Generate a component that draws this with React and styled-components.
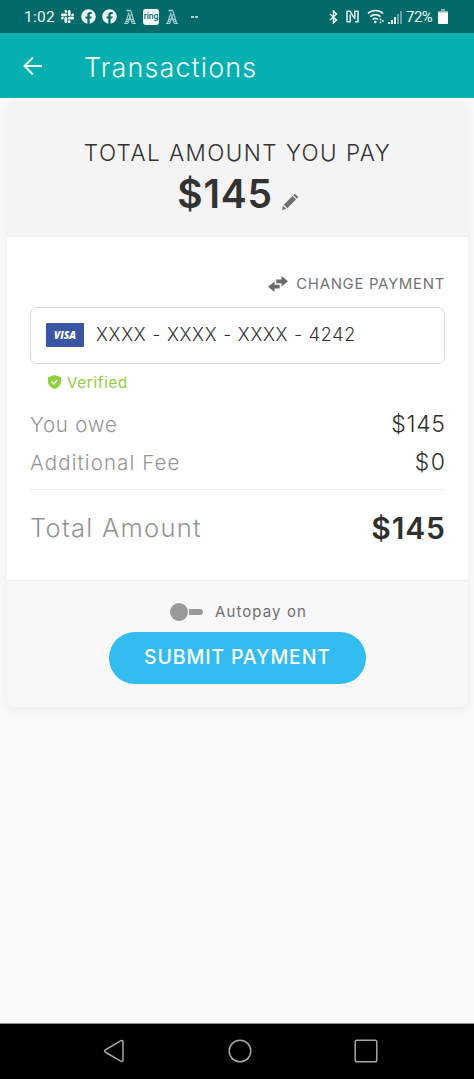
import React, { useState } from "react";
import styled, { createGlobalStyle } from "styled-components";
import { FaSlack, FaFacebook } from "react-icons/fa";

const GlobalStyle = createGlobalStyle`
  * {
    box-sizing: border-box;
  }
  body {
    margin: 0;
    background: #f9f9f9;
    font-family: Inter, "Liberation Sans", sans-serif;
  }
`;
const Screen = styled.div`
  display: flex;
  flex-direction: column;
  width: 474px;
  height: 1079px;
  overflow: hidden;
  background: #f9f9f9;
`;
const StatusBar = styled.div`
  display: flex;
  align-items: center;
  justify-content: space-between;
  flex: none;
  height: 33px;
  padding: 0 26px 0 24px;
  background: #046a69;
  color: #e9f6f5;
  font-family: Roboto, sans-serif;
  font-size: 15.5px;
`;
const StatusGroup = styled.div`
  display: flex;
  align-items: center;
  gap: ${({ $gap }) => $gap}px;
`;
const Clock = styled.span`
  width: 31px;
  margin-right: -1px;
  letter-spacing: 0.3px;
`;
const Connections = styled.span`
  display: flex;
  align-items: center;
  gap: 8px;
  margin-right: -2px;
`;
const Battery = styled.span`
  width: 27px;
  margin-left: -1px;
  font-size: 15px;
  letter-spacing: -0.5px;
`;
const RingBadge = styled.span`
  width: 16px;
  height: 16px;
  border-radius: 3px;
  background: #f4fbfb;
  color: #046a69;
  font: 500 8.5px/15px Roboto, sans-serif;
  text-align: center;
`;
const MoreMark = styled.span`
  display: flex;
  gap: 1px;
  margin-left: 6px;
  &::before,
  &::after {
    content: "";
    width: 3px;
    height: 2px;
    background: #a8d0cf;
  }
`;
const AppBar = styled.header`
  display: flex;
  align-items: center;
  flex: none;
  height: 65px;
  padding: 0 22px;
  background: #06b0b0;
`;
const BackButton = styled.button`
  display: flex;
  width: 62px;
  padding: 0;
  border: none;
  background: none;
`;
const Title = styled.h1`
  margin: 3px 0 0;
  color: #f0fdfd;
  font-size: 27px;
  font-weight: 300;
  letter-spacing: 1.1px;
`;
const Main = styled.main`
  flex: 1;
  padding: 3px 6px 0 7px;
`;
const Card = styled.section`
  border-radius: 8px;
  background: #fff;
  box-shadow: 0 4px 10px rgba(0, 0, 0, 0.05);
`;
const Summary = styled.div`
  height: 136px;
  padding-top: 37px;
  border-radius: 8px 8px 0 0;
  border-bottom: 1px solid #eeeeee;
  background: #f4f4f4;
  color: #323232;
  text-align: center;
`;
const SummaryLabel = styled.div`
  font-size: 22.5px;
  font-weight: 300;
  line-height: 29px;
  letter-spacing: 1.45px;
`;
const SummaryAmount = styled.div`
  display: flex;
  align-items: center;
  justify-content: center;
  gap: 9px;
  font-size: 39px;
  font-weight: 600;
  line-height: 54px;
  letter-spacing: 0.8px;
  svg {
    margin-top: 16px;
  }
`;
const Body = styled.div`
  height: 343px;
  padding: 35px 23px 0;
`;
const ChangePayment = styled.button`
  display: flex;
  align-items: center;
  justify-content: flex-end;
  gap: 8px;
  width: 100%;
  height: 24px;
  padding: 0;
  border: none;
  background: none;
  color: #757575;
  font: 400 15px/24px Inter, sans-serif;
  letter-spacing: 0.65px;
`;
const PaymentMethod = styled.div`
  display: flex;
  align-items: center;
  gap: 12px;
  height: 57px;
  margin-top: 11px;
  padding: 0 15px;
  border: 1px solid #d9d9d9;
  border-radius: 7px;
`;
const VisaBadge = styled.span`
  width: 38px;
  height: 24px;
  margin-top: -1px;
  border-radius: 1px;
  background: #3a55a4;
  color: #fff;
  font: italic 800 10px/24px "Open Sans", sans-serif;
  text-align: center;
`;
const CardNumber = styled.span`
  margin-top: -3px;
  color: #333;
  font-size: 18px;
  font-weight: 300;
  letter-spacing: 0.71px;
  white-space: nowrap;
`;
const Verified = styled.div`
  display: flex;
  align-items: center;
  gap: 6px;
  height: 24px;
  margin: 6px 0 11px;
  padding-left: 18px;
  color: #8fd03f;
  font-size: 15px;
  letter-spacing: 0.75px;
`;
const Row = styled.div`
  display: flex;
  align-items: center;
  justify-content: space-between;
  height: ${({ $total }) => ($total ? 75 : 38)}px;
`;
const RowLabel = styled.span`
  color: #949494;
  font-size: ${({ $total }) => ($total ? 25.5 : 20.5)}px;
  font-weight: 300;
  letter-spacing: ${({ $spacing }) => $spacing}px;
`;
const RowValue = styled.span`
  margin-right: ${({ $spacing }) => -$spacing}px;
  color: #303030;
  font-size: ${({ $total }) => ($total ? 30 : 23)}px;
  font-weight: ${({ $total }) => ($total ? 600 : 300)};
  letter-spacing: ${({ $spacing }) => $spacing}px;
`;
const Divider = styled.hr`
  height: 1px;
  margin: 8px 0 0;
  border: none;
  background: #eeeeee;
`;
const Footer = styled.div`
  display: flex;
  flex-direction: column;
  align-items: center;
  height: 127px;
  padding-top: 18px;
  border-top: 1px solid #f0f0f0;
  border-radius: 0 0 8px 8px;
  background: #f8f8f8;
`;
const Autopay = styled.label`
  display: flex;
  align-items: center;
  gap: 12px;
  height: 24px;
  margin-left: 2px;
  color: #6e6e6e;
  font-size: 15px;
  letter-spacing: 1.1px;
`;
const Switch = styled.button`
  display: flex;
  align-items: center;
  flex-direction: ${({ $on }) => ($on ? "row-reverse" : "row")};
  gap: 1px;
  margin-top: 2px;
  padding: 0;
  border: none;
  background: none;
  &::before {
    content: "";
    width: 18px;
    height: 18px;
    border-radius: 50%;
    background: #999;
  }
  &::after {
    content: "";
    width: 14px;
    height: 6px;
    border-radius: 0 3px 3px 0;
    background: #999;
  }
`;
const SubmitButton = styled.button`
  width: 257px;
  height: 52px;
  margin-top: 9px;
  padding: 0 0 2px;
  border: none;
  border-radius: 26px;
  background: #32bcf0;
  color: #fff;
  font: 500 19.5px Inter, sans-serif;
  letter-spacing: 0.85px;
`;
const NavBar = styled.nav`
  display: flex;
  align-items: center;
  justify-content: space-between;
  flex: none;
  height: 56px;
  padding: 0 96px 2px 103px;
  border-top: 1px solid #8c8c8c;
  background: #000;
`;

const ArchIcon = () => (
  <svg width="14" height="16" viewBox="0 0 14 16" fill="none" stroke="#9fcfcd" strokeWidth="1.2">
    <path d="M1 14.500h4M9 14.500h4M2.500 14 6 3.500M11.500 14 8 2M5 14l2-7 2 7M4 10.500h6M2.800 12.300h2.500M8.700 12.300h2.500M5.500 6h3.500" />
    <path d="M3.500 1.500H8" strokeWidth="1.600" />
  </svg>
);

const BluetoothIcon = () => (
  <svg width="9" height="14" viewBox="0 0 9 14" fill="none" stroke="#e9f6f5" strokeWidth="1.500">
    <path d="m1 4 6.500 6-3 2.800V1.200l3 2.800L1 10" />
  </svg>
);

const NfcIcon = () => (
  <svg width="13" height="13" viewBox="0 0 13 13" fill="none" stroke="#e9f6f5" strokeWidth="1.500">
    <path d="M4.200 4.500v7.300H1V1.200h3l4.800 7.600" />
    <path d="M8.800 8.800V1.200H12v10.600H9" />
  </svg>
);

const WifiIcon = () => (
  <svg width="18" height="15" viewBox="0 0 18 15" fill="none" stroke="#e9f6f5" strokeWidth="1.6">
    <path d="M1 4.500a11 11 0 0 1 15 0M3.300 7.600a7.500 7.500 0 0 1 10.200 0M5.600 10.500a4.200 4.200 0 0 1 5.400 0" />
    <circle cx="8.300" cy="13" r="1.300" fill="#e9f6f5" stroke="none" />
    <path d="M13.500 9.500v1.800M13.500 12.400v1.800M15.800 11v1.800" strokeWidth="1.600" />
  </svg>
);

const SignalIcon = () => (
  <svg width="14" height="14" viewBox="0 0 14 14" fill="#e9f6f5">
    <path d="M0 12h2v2H0zM3 10h2v4H3zM6 7h2v7H6z" />
    <path d="M9 4h2v10H9zM12 1h2v13h-2z" opacity=".42" />
  </svg>
);

const BatteryIcon = () => (
  <svg width="10" height="15" viewBox="0 0 10 15" fill="#fff">
    <path d="M3 0h4v2h3v2H0V2h3z" opacity=".5" />
    <path d="M0 3.500h10V14a1 1 0 0 1-1 1H1a1 1 0 0 1-1-1z" />
  </svg>
);

const BackIcon = () => (
  <svg width="22" height="20" viewBox="0 0 22 20" fill="none" stroke="#f0fdfd" strokeWidth="2">
    <path d="M20 10H2.500M11 1.500 2.500 10l8.500 8.500" />
  </svg>
);

const PencilIcon = () => (
  <svg width="16" height="16" viewBox="0 0 16 16" fill="#707070">
    <path d="m0 16 1-4.300L4.300 15z" />
    <path d="m1.800 10.700 8.700-8.700 3.500 3.500-8.700 8.700z" />
    <path d="m11.300 1.200.8-.8q.8-.8 1.600 0l1.900 1.900q.8.800 0 1.600l-.8.800z" />
  </svg>
);

const SwapIcon = () => (
  <svg width="20" height="16" viewBox="0 0 20 16" fill="#6b6b6b">
    <path d="M8.300 3.400H13.500V0l6.500 5.200-6.500 5.200V7.200H8.300z" />
    <path d="M11.700 12.600H6.500V16L0 10.800l6.500-5.200V8.800h5.200z" />
  </svg>
);

const ShieldIcon = () => (
  <svg width="13" height="14" viewBox="0 0 13 14">
    <path d="M6.500 0 13 2.300v4.200c0 3.500-2.600 6-6.500 7.500C2.600 12.500 0 10 0 6.500V2.300z" fill="#8fd03f" />
    <path d="m3.700 6.800 2 2 3.600-3.700" fill="none" stroke="#fff" strokeWidth="1.400" />
  </svg>
);

const charges = [
  { label: "You owe", value: "$145", labelSpacing: 0.8, valueSpacing: 0.7 },
  { label: "Additional Fee", value: "$0", labelSpacing: 1.1, valueSpacing: 1.4 },
];

const App = () => {
  const [autopay, setAutopay] = useState(false);

  return (
    <Screen>
      <GlobalStyle />
      <StatusBar>
        <StatusGroup $gap={6}>
          <Clock>1:02</Clock>
          <FaSlack size={15} />
          <FaFacebook size={15} />
          <FaFacebook size={15} />
          <ArchIcon />
          <RingBadge>ring</RingBadge>
          <ArchIcon />
          <MoreMark />
        </StatusGroup>
        <StatusGroup $gap={5}>
          <Connections>
            <BluetoothIcon />
            <NfcIcon />
            <WifiIcon />
          </Connections>
          <SignalIcon />
          <Battery>72%</Battery>
          <BatteryIcon />
        </StatusGroup>
      </StatusBar>
      <AppBar>
        <BackButton aria-label="Back">
          <BackIcon />
        </BackButton>
        <Title>Transactions</Title>
      </AppBar>
      <Main>
        <Card>
          <Summary>
            <SummaryLabel>TOTAL AMOUNT YOU PAY</SummaryLabel>
            <SummaryAmount>
              $145
              <PencilIcon />
            </SummaryAmount>
          </Summary>
          <Body>
            <ChangePayment>
              <SwapIcon />
              CHANGE PAYMENT
            </ChangePayment>
            <PaymentMethod>
              <VisaBadge>VISA</VisaBadge>
              <CardNumber>XXXX - XXXX - XXXX - 4242</CardNumber>
            </PaymentMethod>
            <Verified>
              <ShieldIcon />
              Verified
            </Verified>
            {charges.map(({ label, value, labelSpacing, valueSpacing }) => (
              <Row key={label}>
                <RowLabel $spacing={labelSpacing}>{label}</RowLabel>
                <RowValue $spacing={valueSpacing}>{value}</RowValue>
              </Row>
            ))}
            <Divider />
            <Row $total>
              <RowLabel $total $spacing={1.3}>
                Total Amount
              </RowLabel>
              <RowValue $total $spacing={0.9}>
                $145
              </RowValue>
            </Row>
          </Body>
          <Footer>
            <Autopay>
              <Switch
                role="switch"
                aria-checked={autopay}
                aria-label="Autopay"
                $on={autopay}
                onClick={() => setAutopay(!autopay)}
              />
              Autopay on
            </Autopay>
            <SubmitButton>SUBMIT PAYMENT</SubmitButton>
          </Footer>
        </Card>
      </Main>
      <NavBar>
        <svg width="22" height="24" viewBox="0 0 22 24" fill="none" stroke="#a6a6a6" strokeWidth="1.500">
          <path d="M2.200 11 18 1.700q2-.9 2 1.300v18q0 2.200-2 1.300L2.200 13q-1.400-1 0-2z" />
        </svg>
        <svg width="24" height="24" viewBox="0 0 24 24" fill="none" stroke="#a6a6a6" strokeWidth="1.500">
          <circle cx="12" cy="12" r="10.800" />
        </svg>
        <svg width="24" height="24" viewBox="0 0 24 24" fill="none" stroke="#a6a6a6" strokeWidth="1.500">
          <rect x="1.200" y="1.200" width="21.600" height="21.600" rx="1.800" />
        </svg>
      </NavBar>
    </Screen>
  );
};

export default App;
